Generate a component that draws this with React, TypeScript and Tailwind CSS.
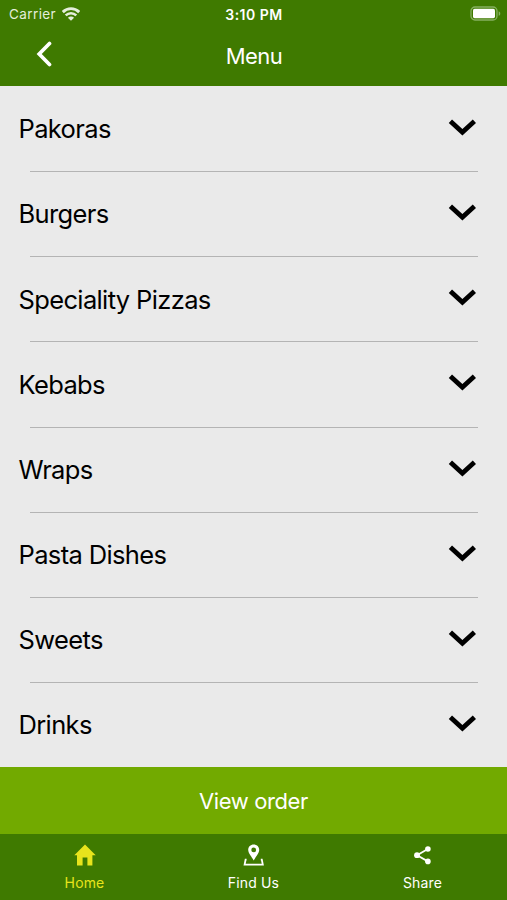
import { useState } from 'react'

const categories: string[] = [
  'Pakoras',
  'Burgers',
  'Speciality Pizzas',
  'Kebabs',
  'Wraps',
  'Pasta Dishes',
  'Sweets',
  'Drinks',
]

function WifiIcon() {
  return (
    <svg viewBox="0 0 18 14" className="h-3.5 w-[18px]" fill="none" stroke="currentColor">
      <path d="M0.8 5.1C5.4 0.5 12.6 0.5 17.2 5.1" strokeWidth="2.9" />
      <path d="M3.7 8.4C6.7 5.4 11.3 5.4 14.3 8.4" strokeWidth="2.5" />
      <path d="M9 13.8L5.9 10.8C7.6 9.1 10.4 9.1 12.1 10.8Z" fill="currentColor" stroke="none" />
    </svg>
  )
}

function BatteryIcon() {
  return (
    <svg viewBox="0 0 31 15" className="h-[15px] w-[31px]" fill="none">
      <rect x="1" y="1" width="26" height="13" rx="4" stroke="#86b060" strokeWidth="1.3" />
      <rect x="3" y="2.8" width="22" height="9.4" rx="1.6" fill="#fff" />
      <path d="M28.7 5.2C30.8 6 30.8 9 28.7 9.8Z" fill="#86b060" />
    </svg>
  )
}

function HomeIcon() {
  return (
    <svg viewBox="0 0 22 22" className="size-[22px]" fill="currentColor">
      <path d="M11 0.6L0.3 11.3H3V21.4H8.6V13.6H13.4V21.4H18.4V11.3H21.7Z" />
    </svg>
  )
}

function FindUsIcon() {
  return (
    <svg viewBox="0 0 22 22" className="size-[22px]" fill="currentColor">
      <path
        fillRule="evenodd"
        d="M10.7 0.4C7.5 0.4 5.2 2.7 5.2 5.8C5.2 9.4 8.7 12.7 10.7 16.6C12.7 12.7 16.2 9.4 16.2 5.8C16.2 2.7 13.9 0.4 10.7 0.4ZM10.7 3.5A2.4 2.4 0 1 1 10.7 8.3A2.4 2.4 0 1 1 10.7 3.5Z"
      />
      <path d="M3.6 15.6H2.6L1.6 20.6H19.8L18.8 15.6H17.8" fill="none" stroke="currentColor" strokeWidth="1.8" />
    </svg>
  )
}

function ShareIcon() {
  return (
    <svg viewBox="0 0 22 22" className="size-[22px]" fill="currentColor">
      <path d="M15.8 5L5.1 11.2L15.8 17.4" fill="none" stroke="currentColor" strokeWidth="1.8" />
      <circle cx="15.9" cy="5" r="2.8" />
      <circle cx="5" cy="11.2" r="2.9" />
      <circle cx="15.9" cy="17.4" r="2.8" />
    </svg>
  )
}

const tabs = [
  { name: 'Home', icon: HomeIcon },
  { name: 'Find Us', icon: FindUsIcon },
  { name: 'Share', icon: ShareIcon },
]

export default function App() {
  const [activeTab, setActiveTab] = useState('Home')

  return (
    <div className="flex h-[900px] w-full flex-col bg-[#eaeaea] font-['Inter',sans-serif] text-white">
      <header className="h-[86px] bg-[#3f7a00]">
        {/* Status bar */}
        <div className="grid h-[27px] grid-cols-3 items-center pr-[6px] pl-[9px] text-[13.5px] leading-none">
          <div className="flex items-center gap-1.5 text-[#e4eedb]">
            <span className="pt-0.5 tracking-[0.4px]">Carrier</span>
            <WifiIcon />
          </div>
          <div className="pt-0.5 pr-0.5 text-center text-[14px] font-semibold tracking-[0.5px]">3:10 PM</div>
          <div className="flex justify-end">
            <BatteryIcon />
          </div>
        </div>

        {/* Title bar */}
        <div className="grid h-[57px] grid-cols-3 items-center">
          <button aria-label="Back" className="ml-9 w-fit">
            <svg viewBox="0 0 16 26" className="mb-[3px] h-[26px] w-4" fill="none" stroke="currentColor">
              <path d="M13.5 2.5L3.2 13L13.5 23.5" strokeWidth="3.7" strokeLinecap="round" />
            </svg>
          </button>
          <h1 className="pl-px text-center text-[22px] leading-none tracking-[-0.5px]">Menu</h1>
        </div>
      </header>

      <ul className="flex flex-1 flex-col text-black">
        {categories.map((category, index) => (
          <li key={category} className="flex flex-1 flex-col">
            <button className="flex flex-1 items-center justify-between pt-px pr-[31px] pl-[18.5px]">
              <span className="text-[25.5px] leading-none tracking-[-0.64px]">{category}</span>
              <svg viewBox="0 0 28 18" className="mb-1 h-[18px] w-7" fill="none" stroke="currentColor">
                <path d="M2.4 3.2L14.4 14.3L26.4 3.2" strokeWidth="4.8" />
              </svg>
            </button>
            {index < categories.length - 1 && <div className="-mb-px mr-[29px] ml-[30px] h-px bg-[#b4b4b4]" />}
          </li>
        ))}
      </ul>

      <button className="h-[67px] bg-[#72aa00] text-[22px] leading-none tracking-[-0.4px]">View order</button>

      <nav className="grid h-[66px] grid-cols-3 bg-[#3f7a00]">
        {tabs.map(({ name, icon: Icon }) => (
          <button
            key={name}
            onClick={() => setActiveTab(name)}
            className={`flex flex-col items-center gap-[9px] pt-2.5 ${activeTab === name ? 'text-[#e8e41c]' : 'text-white'}`}
          >
            <Icon />
            <span className="pt-px text-[14px] leading-none tracking-[0.15px]">{name}</span>
          </button>
        ))}
      </nav>
    </div>
  )
}
